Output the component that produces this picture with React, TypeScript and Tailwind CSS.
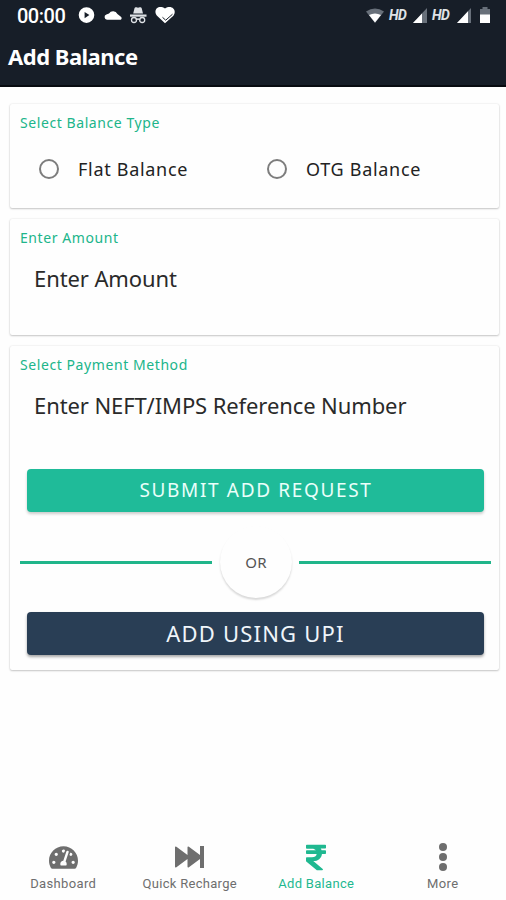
import type { ReactNode } from 'react';
import { FaRupeeSign, FaTachometerAlt } from 'react-icons/fa';

const statusIcons = (
  <svg width="100" height="22" viewBox="0 0 100 22" fill="#fff" className="block">
    {/* play */}
    <path fillRule="evenodd" d="M8.500 2.300a7.800 7.800 0 1 0 0 15.600 7.800 7.800 0 0 0 0-15.600ZM6.600 7v6.200l4.800-3.100Z" />
    {/* cloud */}
    <path d="M29 14.800a2.800 2.800 0 0 1-.6-5.400l2.600-1a4.800 4.800 0 0 1 8.400.6l3.200 2.400a2 2 0 0 1 .2 3.400Z" />
    {/* incognito */}
    <path d="M56.500 3.200q.5-1.500 2-.9l1.500.4 1.700-.4q1.500-.6 2 .9l1.300 5.300h-9.800Z" fill="#dfe2e6" />
    <path d="M52 9.500h16.500v2.200H52Z" fill="#dfe2e6" />
    <path d="M62 14.800q-2-1.500-4 0" fill="none" stroke="#dfe2e6" strokeWidth="1.500" />
    <circle cx="56" cy="15" r="2.500" fill="none" stroke="#dfe2e6" strokeWidth="1.300" />
    <circle cx="64.200" cy="15" r="2.500" fill="none" stroke="#dfe2e6" strokeWidth="1.300" />
    {/* heart */}
    <path d="M87 18.300 79 10.800C74.500 5 80.500-1 87 3.500c6.500-4.500 12.500 1.700 8.400 7.200Z" />
    <path d="m84.500 12.300 3.200 2.900 6.800-6" fill="none" stroke="#171e28" strokeWidth="1" />
  </svg>
);

function Signal({ fill }: { fill: string }) {
  return (
    <svg width="14" height="15" viewBox="0 0 14 15" className="block shrink-0">
      <path d="M14 0v15H0Z" fill="#68707a" />
      <path d={fill} fill="#fff" />
    </svg>
  );
}

function Card({ title, className, children }: { title: string; className: string; children: ReactNode }) {
  return (
    <section className={`rounded-[2px] bg-[#fefefe] px-[10px] shadow-[0_1px_2px_rgba(0,0,0,0.2),0_0_2px_rgba(0,0,0,0.12)] ${className}`}>
      <h2 className="h-[41px] pt-[9px] text-[14px] leading-[20px] tracking-[0.58px] text-[#20b58a]">{title}</h2>
      {children}
    </section>
  );
}

function Radio({ label }: { label: string }) {
  return (
    <label className="flex w-[228px] items-center pl-[19px]">
      <span className="size-[20px] rounded-full border-2 border-[#7d7d7d]" />
      <span className="pl-[19px] text-[18px] leading-[26px] tracking-[0.7px] text-[#222]">{label}</span>
    </label>
  );
}

function Tab({ icon, label, className, active }: { icon: ReactNode; label: string; className: string; active?: boolean }) {
  return (
    <div className={`flex flex-1 flex-col items-center ${active ? 'text-[#1fb890]' : 'text-[#6e6e6e]'}`}>
      <div className="flex h-[32px] items-center">{icon}</div>
      <span className={`pt-[1px] text-[13px] leading-[20px] whitespace-nowrap ${className}`}>{label}</span>
    </div>
  );
}

export default function App() {
  return (
    <main className="flex h-[900px] w-[506px] flex-col overflow-hidden bg-[#fefefe] font-['Noto_Sans',sans-serif]">
      <header className="h-[87px] border-b-2 border-[#080b10] bg-[#171e28] text-white">
        <div className="flex h-[31px] items-center justify-between pr-[16px] pl-[17px]">
          <div className="flex items-center">
            <span className="w-[61px] font-[Roboto] text-[20px] leading-[30px] font-medium tracking-[-0.5px]">00:00</span>
            <span>{statusIcons}</span>
          </div>
          <div className="flex items-center pb-[1px] font-[Roboto] text-[14px] font-bold text-[#dfe2e6] italic">
            <svg width="18" height="15" viewBox="0 0 18 15" className="shrink-0">
              <path d="M0 3.500Q9-2.500 18 3.500L9 15Z" fill="#68707a" />
              <path d="M3 7Q9 3.800 15 7L9 14.500Z" fill="#fff" />
            </svg>
            <span className="w-[29px] pl-[5px] leading-[20px] tracking-[-0.5px]">HD</span>
            <Signal fill="M9 5.400V15H0Z" />
            <span className="w-[30px] pl-[5px] leading-[20px] tracking-[-0.5px]">HD</span>
            <Signal fill="M11 3.200V15H0Z" />
            <svg width="10" height="16" viewBox="0 0 10 16" className="ml-[9px] shrink-0">
              <path d="M0 2h2.500V0h5v2H10v14H0Z" fill="#68707a" />
              <path d="M0 7.500h10V16H0Z" fill="#fff" />
            </svg>
          </div>
        </div>
        <h1 className="pt-[9px] pl-[8px] text-[22px] leading-[32px] font-bold tracking-[-0.5px]">Add Balance</h1>
      </header>

      <div className="flex flex-1 flex-col gap-[11px] pt-[17px] pr-[7px] pl-[10px]">
        <Card title="Select Balance Type" className="h-[104px]">
          <div className="flex pt-[11px]">
            <Radio label="Flat Balance" />
            <Radio label="OTG Balance" />
          </div>
        </Card>

        <Card title="Enter Amount" className="h-[116px]">
          <p className="pt-[3px] pl-[14px] text-[22px] leading-[30px] tracking-[-0.1px] text-[#2a2a2a]">Enter Amount</p>
        </Card>

        <Card title="Select Payment Method" className="h-[324px]">
          <p className="pt-[3px] pl-[14px] text-[22px] leading-[30px] tracking-[-0.1px] whitespace-nowrap text-[#2a2a2a]">Enter NEFT/IMPS Reference Number</p>
          <button className="mt-[49px] ml-[7px] block h-[43px] w-[457px] rounded-[4px] bg-[#1fbb99] pl-[1px] text-[19px] tracking-[1.65px] text-[#eafffa] shadow-[0_2px_3px_rgba(0,0,0,0.2)]">
            SUBMIT ADD REQUEST
          </button>
          <div className="flex h-[100px] items-center">
            <div className="h-[3px] w-[192px] shrink-0 bg-[#20b58a]" />
            <div className="mr-[7px] ml-[8px] flex size-[72px] shrink-0 items-center justify-center rounded-full bg-[#fefefe] text-[15px] tracking-[0.3px] text-[#555] shadow-[0_2px_2px_rgba(0,0,0,0.15)]">OR</div>
            <div className="h-[3px] w-[192px] shrink-0 bg-[#20b58a]" />
          </div>
          <button className="ml-[7px] block h-[43px] w-[457px] rounded-[4px] bg-[#293e55] text-[22px] tracking-[1.2px] text-[#f0f5fa] shadow-[0_2px_3px_rgba(0,0,0,0.35)]">
            ADD USING UPI
          </button>
        </Card>
      </div>

      <nav className="flex h-[59px] font-[Roboto]">
        <Tab icon={<FaTachometerAlt className="size-[29px]" />} label="Dashboard" className="tracking-[0.35px]" />
        <Tab
          icon={
            <svg width="29" height="22" viewBox="0 0 29 22" fill="currentColor">
              <path d="M0 1.500Q0 0 1.400.8L12.500 9V1.500Q12.500 0 13.900.8L25 9V0h4v22h-4V13l-11.100 8.200q-1.400.8-1.400-.7V13L1.400 21.200Q0 22 0 20.500Z" />
            </svg>
          }
          label="Quick Recharge"
          className="tracking-[0.3px]"
        />
        <Tab
          icon={<FaRupeeSign className="h-[29px] w-[20px]" preserveAspectRatio="none" />}
          label="Add Balance"
          className="tracking-[0.3px]"
          active
        />
        <Tab
          icon={
            <svg width="8" height="28" viewBox="0 0 8 28" fill="currentColor">
              <circle cx="4" cy="4" r="4" />
              <circle cx="4" cy="14" r="4" />
              <circle cx="4" cy="24" r="4" />
            </svg>
          }
          label="More"
          className="tracking-[0.4px]"
        />
      </nav>
    </main>
  );
}
